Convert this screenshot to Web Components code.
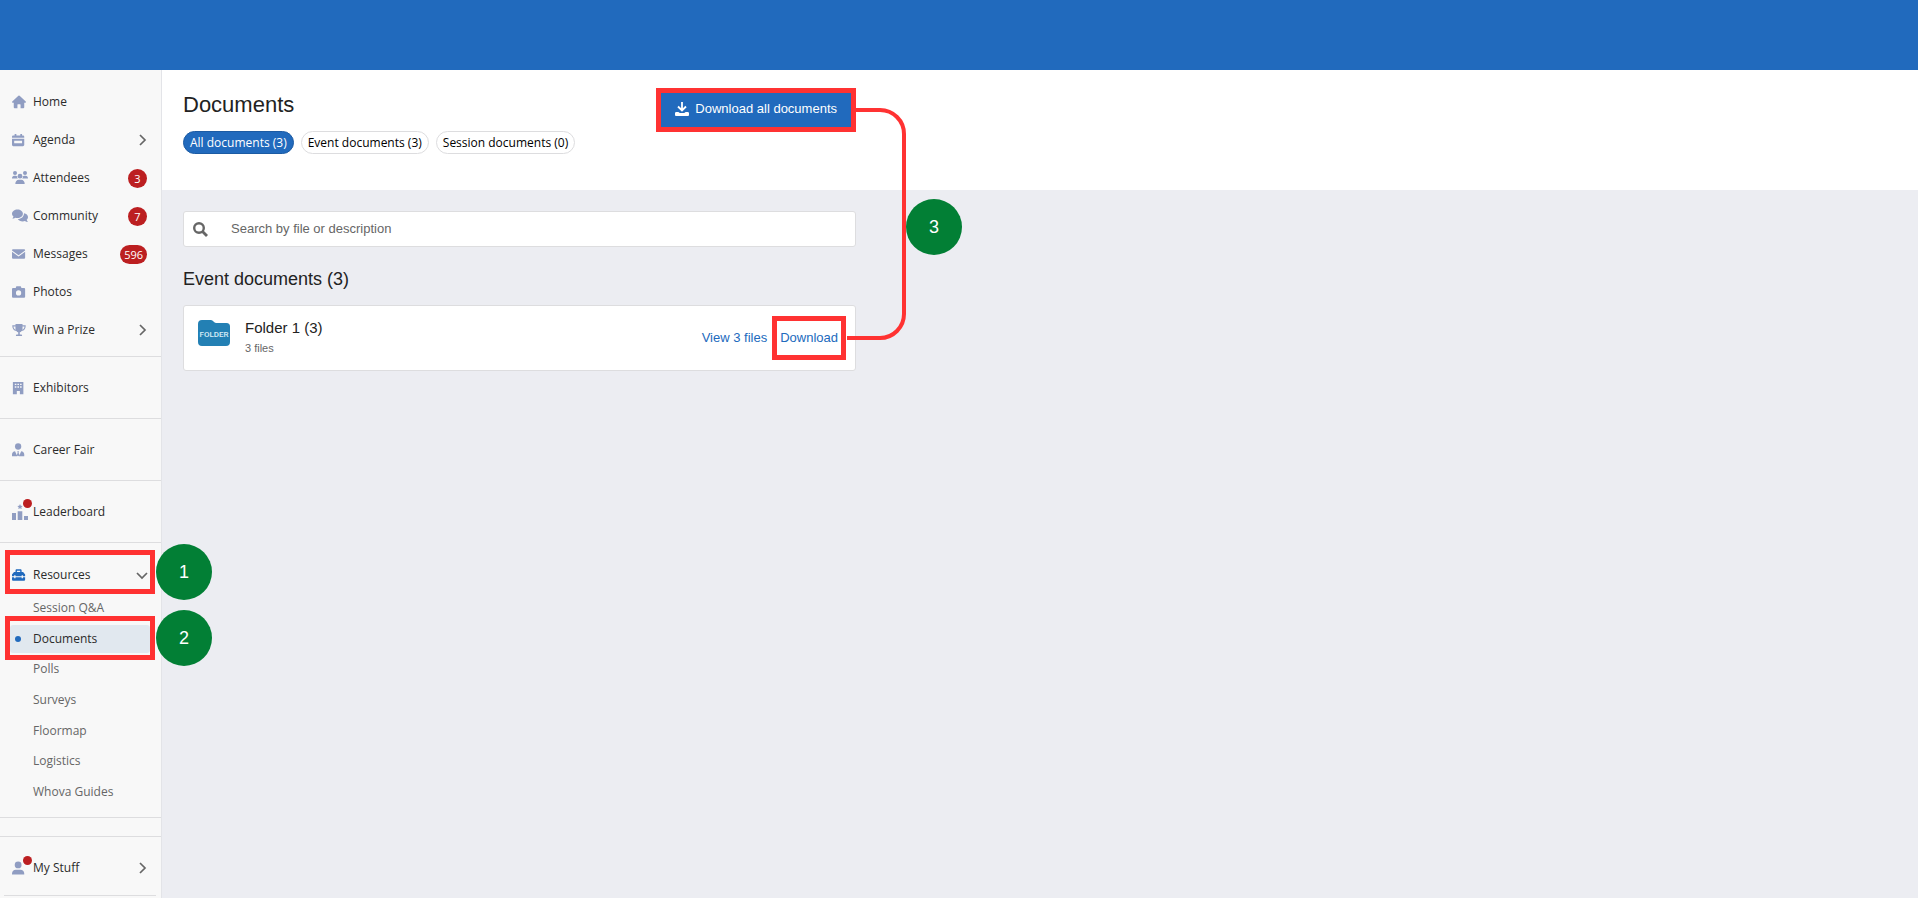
<!DOCTYPE html>
<html lang="en">
<head>
<meta charset="utf-8">
<meta name="viewport" content="width=device-width, initial-scale=1">
<title>Documents</title>
<style>
:root {
	--brand: #216abd;
	--mark: #ff3232;
	--step: #027f35;
	--alert: #bc1f21;
	--line: #dddddf;
	--icon: #909dc2;
	--font-nav: "Open Sans", "Noto Sans", sans-serif;
	--font-page: "Liberation Sans", Arial, sans-serif;
}

body {
	margin: 0;
	background: #ecedf2;
	color: #222;
	font-family: var(--font-page);
}
</style>
</head>
<body>
<event-app>
	<side-nav slot="nav">
		<nav-section class="first">
			<nav-item icon="home">Home</nav-item>
			<nav-item icon="agenda" arrow="right">Agenda</nav-item>
			<nav-item icon="attendees" badge="3">Attendees</nav-item>
			<nav-item icon="community" badge="7">Community</nav-item>
			<nav-item icon="messages" badge="596">Messages</nav-item>
			<nav-item icon="photos">Photos</nav-item>
			<nav-item icon="prize" arrow="right">Win a Prize</nav-item>
		</nav-section>
		<nav-section><nav-item icon="exhibitors">Exhibitors</nav-item></nav-section>
		<nav-section><nav-item icon="career">Career Fair</nav-item></nav-section>
		<nav-section><nav-item icon="leaderboard" dot>Leaderboard</nav-item></nav-section>
		<nav-section class="resources">
			<nav-item icon="resources" arrow="down" active>Resources<step-mark slot="mark" step="1"></step-mark></nav-item>
			<sub-nav>
				<sub-item>Session Q&amp;A</sub-item>
				<sub-item current>Documents<step-mark slot="mark" step="2"></step-mark></sub-item>
				<sub-item>Polls</sub-item>
				<sub-item>Surveys</sub-item>
				<sub-item>Floormap</sub-item>
				<sub-item>Logistics</sub-item>
				<sub-item>Whova Guides</sub-item>
			</sub-nav>
		</nav-section>
		<nav-section class="empty"></nav-section>
		<nav-section class="last"><nav-item icon="user" arrow="right" dot>My Stuff</nav-item></nav-section>
	</side-nav>
	<documents-page>
		<doc-filter slot="filters" pressed>All documents (3)</doc-filter>
		<doc-filter slot="filters">Event documents (3)</doc-filter>
		<doc-filter slot="filters">Session documents (0)</doc-filter>
		<doc-search></doc-search>
		<doc-group heading="Event documents (3)">
			<folder-card name="Folder 1 (3)" count="3"></folder-card>
		</doc-group>
		<step-link slot="steps" step="3"></step-link>
	</documents-page>
</event-app>

<script>
const icons = {
	home: `<path d="M7.300.8a1 1 0 0 1 1.400 0l7 6.500c.6.6.2 1.500-.5 1.500H14V14c0 .6-.4 1-1 1H9.800v-3.800c0-.4-.2-.7-.6-.7H6.800c-.4 0-.6.300-.6.7V15H3c-.6 0-1-.4-1-1V8.800H.8c-.7 0-1.100-.9-.5-1.500z"/>`,
	agenda: `<path d="M3 1h2v1.800h4.500V1h2v1.800h1c.8 0 1.500.6 1.500 1.400V5.500H0V4.200c0-.8.700-1.400 1.500-1.400H3zM0 6.500h14v7c0 .8-.7 1.500-1.500 1.500h-11C.7 15 0 14.300 0 13.500zM2.500 8.800v3h9v-3z" fill-rule="evenodd"/>`,
	attendees: `<circle cx="3" cy="3" r="2"/><circle cx="13" cy="3" r="2"/><circle cx="8" cy="6.200" r="2.400"/><path d="M0 8.500C0 6.800 1 5.800 2.200 5.800h1.500c.6 0 1 .2 1.300.5 0 1 .3 1.700.8 2.200H0zM16 8.500c0-1.700-1-2.700-2.200-2.700h-1.500c-.6 0-1 .2-1.300.5 0 1-.3 1.700-.8 2.200H16zM3.300 14c0-2.500 1.500-4.200 3.500-4.200h2.400c2 0 3.500 1.700 3.500 4.200z"/>`,
	community: `<path d="M5.500 1.500c3 0 5.400 1.900 5.400 4.300s-2.400 4.300-5.400 4.300c-.8 0-1.500-.1-2.200-.4-.8.500-1.800.9-3 .9.600-.7 1-1.400 1.200-2.100C.6 7.800 0 6.900 0 5.800 0 3.400 2.500 1.500 5.500 1.500z"/><path d="M12 5.200c2.300.3 4 1.900 4 3.900 0 1.100-.5 2-1.300 2.700.2.700.6 1.500 1.200 2.200-1.200 0-2.200-.4-3-.9-.7.200-1.400.4-2.200.4-2.200 0-4-1-4.900-2.500 3.600-.1 6.200-2.400 6.200-5.800z"/>`,
	messages: `<path d="M1.500 2.500h12c.9 0 1.500.6 1.500 1.400L7.500 9.300 0 3.900c0-.8.6-1.400 1.500-1.400zM0 5.500l7.500 5.400L15 5.500V12c0 .9-.6 1.500-1.500 1.500h-12C.6 13.500 0 12.900 0 12z"/>`,
	photos: `<path d="M5 1.500h5l.8 2h2.700c.9 0 1.500.6 1.500 1.500v8c0 .9-.6 1.500-1.500 1.500h-12C.6 14.500 0 13.900 0 13V5c0-.9.6-1.500 1.500-1.500h2.700zM7.500 6a3 3 0 1 0 0 6 3 3 0 0 0 0-6z" fill-rule="evenodd"/>`,
	prize: `<path d="M4 1h8v1.500h3.700c0 4-1.500 6.300-4.700 6.500-.6.900-1.300 1.500-2.100 1.700v2.300h1.400c.7 0 1.200.6 1.200 1.300v.5h-7v-.5c0-.7.5-1.300 1.200-1.300h1.400v-2.300C6.300 10.500 5.600 9.900 5 9 1.800 8.800.3 6.500.3 2.500H4zM1.700 3.900c.2 1.900 1 3.200 2.500 3.700A10 10 0 0 1 4 3.900zm10.300 0a10 10 0 0 1-.2 3.700c1.500-.5 2.300-1.800 2.500-3.700z" fill-rule="evenodd"/>`,
	exhibitors: `<path d="M1 1h12v14H9v-3.500H5.500V15H1zM3.200 3v1.600H5V3zm3 0v1.600H8V3zm3 0v1.600H11V3zm-6 3v1.600H5V6zm3 0v1.600H8V6zm3 0v1.600H11V6z" fill-rule="evenodd"/>`,
	career: `<circle cx="7" cy="4" r="3.600"/><path d="M0 15v-2c0-2 1.500-3.500 3.500-3.700L6 15zm6-5.500h2L7.500 11l1.100 3L7 15l-1.600-1 1.100-3zM14 15v-2c0-2-1.500-3.500-3.500-3.700L8 15z"/>`,
	leaderboard: `<path d="M0 9h4v7H0zM5.700 7.200h4.600V16H5.700zM12 12h4v4h-4zM8 0l.8 1.700 1.900.2-1.400 1.300.4 1.900L8 4.200l-1.700.9.4-1.900-1.400-1.300 1.900-.2z"/>`,
	resources: `<path d="M4 4.500V3c0-.9.600-1.500 1.500-1.500h4c.9 0 1.500.6 1.500 1.500v1.500h1.700L15 7.300v2.200h-2.500V8.300H11v1.200H4V8.300H2.500v1.200H0V7.300l2.300-2.800zm1.600 0h3.800V3H5.600zM0 10.500h2.500v1.200H4v-1.200h7v1.200h1.500v-1.200H15v2.500c0 .9-.6 1.500-1.500 1.500h-12C.6 14.500 0 13.900 0 13z" fill-rule="evenodd"/>`,
	user: `<circle cx="7" cy="4.500" r="3.900"/><path d="M0 15.500v-1c0-2.600 2-4.500 4.300-4.500h5.400C12 10 14 11.900 14 14.500v1z"/>`,
};

const svgIcon = (name) =>
	`<svg aria-hidden="true" part="icon" viewBox="0 0 16 16" fill="currentColor">${icons[name]}</svg>`;

const chevrons = {
	right: `<svg aria-hidden="true" class="arrow" width="12" height="12" viewBox="0 0 12 12" fill="none" stroke="#666" stroke-width="1.7"><path d="m4 1 5 5-5 5"/></svg>`,
	down: `<svg aria-hidden="true" class="arrow" width="12" height="12" viewBox="0 0 12 12" fill="none" stroke="#666" stroke-width="1.7"><path d="m1 4 5 5 5-5"/></svg>`,
};

class BaseElement extends HTMLElement {
	connectedCallback() {
		if (!this.shadowRoot) {
			this.attachShadow({ mode: "open" });
			this.shadowRoot.innerHTML = `<style>${this.styles}</style>${this.template}`;
		}
	}
}

class EventApp extends BaseElement {
	styles = /*css*/ `
:host {
	display: flex;
	flex-direction: column;
	min-height: 100vh;
}
header {
	height: 70px;
	background: var(--brand);
}
.body {
	display: grid;
	grid-template-columns: 162px 1fr;
	flex: 1;
}`;
	template = /*html*/ `
<header></header>
<div class="body">
	<slot name="nav"></slot>
	<slot></slot>
</div>`;
}

class SideNav extends BaseElement {
	styles = /*css*/ `
:host {
	display: block;
	position: relative;
	z-index: 1;
	background: #f8f8f8;
	border-right: 1px solid #e3e4e8;
	font: 12px/20px var(--font-nav);
}`;
	template = /*html*/ `<nav aria-label="Event"><slot></slot></nav>`;
}

class NavSection extends BaseElement {
	styles = /*css*/ `
:host {
	display: block;
	padding: 12px 0 11px;
	border-bottom: 1px solid var(--line);
}
:host(.first) {
	padding: 13px 0 7px;
}
:host(.resources) {
	padding-top: 13px;
}
:host(.empty) {
	padding: 9px 0;
}
:host(.last) {
	margin: 0 5px 0 4px;
	padding-bottom: 8px;
}
:host(.last) slot {
	display: block;
	margin: 0 -5px 0 -4px;
}`;
	template = /*html*/ `<slot></slot>`;
}

class NavItem extends BaseElement {
	styles = /*css*/ `
:host {
	display: block;
	position: relative;
}
a {
	display: flex;
	align-items: center;
	height: 38px;
	padding: 0 14px 0 12px;
	color: #2b2b2b;
	text-decoration: none;
}
.icon {
	position: relative;
	display: flex;
	width: 21px;
	color: var(--icon);
}
.icon svg {
	width: 14px;
	height: 14px;
}
:host(:is([icon=attendees], [icon=community], [icon=leaderboard])) .icon svg {
	width: 16px;
	height: 16px;
}
:host([active]) .icon {
	color: var(--brand);
}
.label {
	flex: 1;
	white-space: nowrap;
}
.arrow {
	margin-right: -1px;
}
.dot {
	position: absolute;
	left: 11px;
	top: -5px;
	width: 9px;
	height: 9px;
	border-radius: 50%;
	background: var(--alert);
}
.badge {
	box-sizing: border-box;
	min-width: 19px;
	padding: 0 4px;
	border-radius: 10px;
	background: var(--alert);
	color: #fff;
	font-size: 11px;
	line-height: 19px;
	text-align: center;
}`;
	get template() {
		const badge = this.getAttribute("badge");
		return /*html*/ `
<a href="#">
	<span class="icon">${svgIcon(this.getAttribute("icon"))}${this.hasAttribute("dot") ? `<span class="dot"></span>` : ""}</span>
	<span class="label"><slot></slot></span>
	${badge ? `<span class="badge">${badge}</span>` : ""}
	${chevrons[this.getAttribute("arrow")] ?? ""}
</a>
<slot name="mark"></slot>`;
	}
}

class SubNav extends BaseElement {
	styles = /*css*/ `
:host {
	display: flex;
	flex-direction: column;
	justify-content: space-between;
	min-height: 212px;
}`;
	template = /*html*/ `<slot></slot>`;
}

class SubItem extends BaseElement {
	styles = /*css*/ `
:host {
	display: block;
	position: relative;
}
a {
	display: flex;
	align-items: center;
	height: 28px;
	margin: 0 11px 0 10px;
	border-radius: 3px;
	color: #666;
	text-decoration: none;
}
a::before {
	content: "";
	width: 6px;
	height: 6px;
	margin: 0 12px 0 5px;
	border-radius: 50%;
}
:host([current]) a {
	background: #e1e8ef;
	color: #2b2b2b;
}
:host([current]) a::before {
	background: var(--brand);
}`;
	template = /*html*/ `<a href="#"><slot></slot></a><slot name="mark"></slot>`;
}

const stepStyles = /*css*/ `
.step {
	display: flex;
	align-items: center;
	justify-content: center;
	width: 56px;
	height: 56px;
	border-radius: 50%;
	background: var(--step);
	color: #fff;
	font: 18px/20px var(--font-page);
}`;

// Red frame round a menu row, with its numbered circle at the right
class StepMark extends BaseElement {
	styles = /*css*/ `
:host {
	position: absolute;
	inset: -9px 6px -7px 5px;
	display: flex;
	align-items: center;
	gap: 1px;
	pointer-events: none;
}
:host([step="1"]) {
	inset: -6px 6px 0 5px;
}
.frame {
	box-sizing: border-box;
	flex: 0 0 100%;
	height: 100%;
	border: 5px solid var(--mark);
}
.step {
	flex: none;
}
${stepStyles}`;
	get template() {
		return /*html*/ `<span class="frame"></span><span class="step">${this.getAttribute("step")}</span>`;
	}
}

// Line that joins both download controls, with its numbered circle
class StepLink extends BaseElement {
	styles = /*css*/ `
:host {
	position: absolute;
	left: calc(100% - 9px);
	top: 38px;
	display: flex;
	align-items: center;
	pointer-events: none;
}
svg {
	display: block;
}
.step {
	position: absolute;
	left: 59px;
	top: 91px;
}
${stepStyles}`;
	get template() {
		return /*html*/ `
<svg aria-hidden="true" width="60" height="232" viewBox="0 0 60 232" fill="none" stroke="#ff3232" stroke-width="4">
	<path d="M9 2h24a24 24 0 0 1 24 24v180a24 24 0 0 1-24 24H0"/>
</svg>
<span class="step">${this.getAttribute("step")}</span>`;
	}
}

class DocumentsPage extends BaseElement {
	styles = /*css*/ `
:host {
	display: block;
	min-width: 0;
}
.column {
	box-sizing: border-box;
	max-width: 694px;
	padding-left: 21px;
}
.top {
	background: #fff;
}
.top .column {
	position: relative;
	display: flex;
	justify-content: space-between;
	align-items: flex-start;
	height: 120px;
	padding-top: 18px;
}
h1 {
	margin: 4px 0 13px;
	font-size: 22px;
	line-height: 26px;
	font-weight: 400;
}
.filters {
	display: flex;
	gap: 7px;
}
button {
	display: flex;
	align-items: center;
	gap: 6px;
	height: 44px;
	padding: 0 14px 2px;
	border: 5px solid var(--mark);
	background: var(--brand);
	color: #fff;
	font: 13px/20px var(--font-page);
	white-space: nowrap;
}
.content {
	padding-top: 21px;
}`;
	template = /*html*/ `
<main>
	<div class="top">
		<div class="column">
			<div>
				<h1>Documents</h1>
				<div class="filters"><slot name="filters"></slot></div>
			</div>
			<button type="button">
				<svg aria-hidden="true" width="14" height="14" viewBox="0 0 14 14" fill="none" stroke="#fff" stroke-width="1.8"><path d="M7 0v8M3 4.500l4 4 4-4"/><path d="M1.300 10h2l1.500 1h4.400l1.500-1h2c.8 0 1.300.6 1.300 1.300v1.400c0 .8-.5 1.300-1.300 1.300H1.300C.5 14 0 13.500 0 12.700v-1.400C0 10.600.5 10 1.300 10z" fill="#fff" stroke="none"/></svg>
				Download all documents
			</button>
			<slot name="steps"></slot>
		</div>
	</div>
	<div class="column content"><slot></slot></div>
</main>`;
}

class DocFilter extends BaseElement {
	styles = /*css*/ `
:host {
	display: block;
}
button {
	height: 23px;
	padding: 0 6px;
	border: 1px solid var(--line);
	border-radius: 12px;
	background: #fff;
	color: #000;
	font: 12px/20px var(--font-nav);
	white-space: nowrap;
}
:host([pressed]) button {
	border-color: #1c5ba3;
	background: var(--brand);
	color: #fff;
}`;
	get template() {
		return /*html*/ `<button type="button" aria-pressed="${this.hasAttribute("pressed")}"><slot></slot></button>`;
	}
}

class DocSearch extends BaseElement {
	styles = /*css*/ `
:host {
	display: block;
}
label {
	display: flex;
	align-items: center;
	gap: 23px;
	height: 34px;
	padding-left: 9px;
	border: 1px solid var(--line);
	border-radius: 3px;
	background: #fff;
}
input {
	flex: 1;
	border: 0;
	padding: 0;
	outline: none;
	background: none;
	font: 13px/20px var(--font-page);
}
input::placeholder {
	color: #666;
}`;
	template = /*html*/ `
<label>
	<svg aria-hidden="true" width="15" height="15" viewBox="0 0 15 15" fill="none" stroke="#666"><circle cx="6" cy="6" r="4.800" stroke-width="2.400"/><path d="m9.500 9.500 4.500 4.500" stroke-width="2.800"/></svg>
	<input type="search" aria-label="Search documents" placeholder="Search by file or description">
</label>`;
}

class DocGroup extends BaseElement {
	styles = /*css*/ `
:host {
	display: block;
}
h2 {
	margin: 20px 0 14px;
	font-size: 18px;
	line-height: 24px;
	font-weight: 400;
}`;
	get template() {
		return /*html*/ `<section><h2>${this.getAttribute("heading")}</h2><slot></slot></section>`;
	}
}

class FolderCard extends BaseElement {
	styles = /*css*/ `
:host {
	display: flex;
	align-items: center;
	padding: 12px 17px 12px 14px;
	border: 1px solid var(--line);
	border-radius: 3px;
	background: #fff;
}
.folder {
	flex: none;
	align-self: flex-start;
	margin: 2px 15px 0 0;
}
.info {
	flex: 1;
}
h3 {
	margin: 0;
	font-size: 15px;
	line-height: 20px;
	font-weight: 400;
}
p {
	margin: 0;
	color: #666;
	font-size: 11px;
	line-height: 20px;
}
.actions {
	display: flex;
	gap: 13px;
}
a {
	color: var(--brand);
	font-size: 13px;
	line-height: 20px;
	text-decoration: none;
}
.marked {
	position: relative;
}
.marked::after {
	content: "";
	position: absolute;
	inset: -12px -8px;
	border: 5px solid var(--mark);
	pointer-events: none;
}`;
	get template() {
		const count = this.getAttribute("count");
		return /*html*/ `
<svg aria-hidden="true" class="folder" width="32" height="26" viewBox="0 0 32 26">
	<path d="M4 0h9c2 0 3 3 5 3h10.500A3.500 3.500 0 0 1 32 6.500V22a4 4 0 0 1-4 4H4a4 4 0 0 1-4-4V4a4 4 0 0 1 4-4z" fill="#2380b4"/>
	<text x="16" y="17" text-anchor="middle" fill="#d9edf7" font-family="Roboto, sans-serif" font-size="8" font-weight="500">FOLDER</text>
</svg>
<div class="info">
	<h3>${this.getAttribute("name")}</h3>
	<p>${count} files</p>
</div>
<div class="actions">
	<a href="#">View ${count} files</a>
	<a href="#" class="marked">Download</a>
</div>`;
	}
}

customElements.define("event-app", EventApp);
customElements.define("side-nav", SideNav);
customElements.define("nav-section", NavSection);
customElements.define("nav-item", NavItem);
customElements.define("sub-nav", SubNav);
customElements.define("sub-item", SubItem);
customElements.define("step-mark", StepMark);
customElements.define("step-link", StepLink);
customElements.define("documents-page", DocumentsPage);
customElements.define("doc-filter", DocFilter);
customElements.define("doc-search", DocSearch);
customElements.define("doc-group", DocGroup);
customElements.define("folder-card", FolderCard);
</script>
</body>
</html>
